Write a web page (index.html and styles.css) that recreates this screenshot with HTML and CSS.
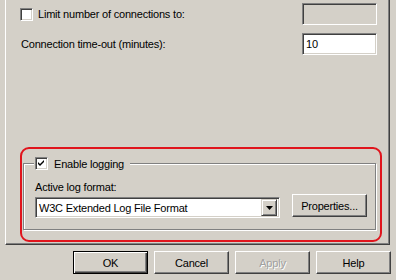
FILE: index.html
```html
<!DOCTYPE html>
<html>
<head>
<meta charset="utf-8">
<link rel="stylesheet" href="styles.css">
</head>
<body>
<div class="page">
  <div class="row row1">
    <label class="check"><span class="box"></span><span class="txt">Limit number of connections to:</span></label>
    <div class="field disabled"></div>
  </div>
  <div class="row row2">
    <span class="lbl">Connection time-out (minutes):</span>
    <div class="field">10</div>
  </div>
  <div class="annot">
    <fieldset class="group">
      <legend class="legend"><span class="box checked"><svg width="7" height="7" viewBox="0 0 7 7"><path d="M0 2 L2 4 L6 0 L6 2 L2 6 L0 4 Z" fill="#000"/></svg></span><span class="txt">Enable logging</span></legend>
      <div class="lbl2">Active log format:</div>
      <div class="fmtrow">
        <div class="combo"><span class="ctext">W3C Extended Log File Format</span><span class="drop"><svg width="7" height="4" viewBox="0 0 7 4"><path d="M0 0 H7 L3.5 4 Z" fill="#000"/></svg></span></div>
        <button class="btn">Properties...</button>
      </div>
    </fieldset>
  </div>
</div>
<div class="buttons">
  <button class="btn default">OK</button>
  <button class="btn">Cancel</button>
  <button class="btn off">Apply</button>
  <button class="btn">Help</button>
</div>
</body>
</html>
```
FILE: styles.css
```css
html, body {
  margin: 0;
  padding: 0;
}
body {
  width: 396px;
  height: 280px;
  overflow: hidden;
  background: #d4d0c8;
  font-family: "Liberation Sans", Arial, sans-serif;
  font-size: 11px;
  letter-spacing: -0.2px;
  color: #000;
}
.page {
  box-sizing: border-box;
  margin-left: 5px;
  width: 385px;
  height: 245px;
  border-left: 1px solid #fff;
  border-right: 1px solid #404040;
  border-bottom: 1px solid #404040;
  box-shadow: inset -1px -1px 0 #808080;
  padding-top: 3px;
  overflow: hidden;
}
.row {
  display: flex;
  align-items: center;
  justify-content: space-between;
  height: 22px;
  padding-right: 12px;
}
.row1 {
  padding-left: 14px;
}
.row2 {
  margin-top: 8px;
  padding-left: 15px;
}
.check {
  display: flex;
  align-items: center;
}
.box {
  box-sizing: border-box;
  width: 13px;
  height: 13px;
  background: #fff;
  border-top: 1px solid #808080;
  border-left: 1px solid #808080;
  border-right: 1px solid #fff;
  border-bottom: 1px solid #fff;
  box-shadow: inset 1px 1px 0 #404040, inset -1px -1px 0 #d4d0c8;
  display: flex;
  align-items: center;
  justify-content: center;
  flex: none;
}
.check .txt {
  margin-left: 5px;
}
.field {
  box-sizing: border-box;
  width: 75px;
  height: 22px;
  background: #fff;
  border-top: 1px solid #808080;
  border-left: 1px solid #808080;
  border-right: 1px solid #fff;
  border-bottom: 1px solid #fff;
  box-shadow: inset 1px 1px 0 #404040, inset -1px -1px 0 #d4d0c8;
  padding: 4px 0 0 3px;
  line-height: 13px;
}
.field.disabled {
  background: #d4d0c8;
}
.annot {
  box-sizing: border-box;
  margin: 92px 0 0 14px;
  width: 362px;
  border: 2px solid #e0141c;
  border-radius: 9px;
  padding: 8px 0 10px 1px;
}
.group {
  box-sizing: border-box;
  width: 353px;
  margin: 0;
  border: 1px solid #808080;
  box-shadow: inset 1px 1px 0 #fff, 1px 1px 0 #fff;
  padding: 0 8px 11px 11px;
  min-width: 0;
}
.legend {
  display: flex;
  align-items: center;
  height: 13px;
  padding: 0 6px 0 1px;
  margin-left: -1px;
  background: #d4d0c8;
}
.legend .txt {
  margin-left: 6px;
}
.lbl2 {
  margin-top: 10px;
  height: 14px;
  line-height: 14px;
}
.fmtrow {
  display: flex;
  align-items: flex-start;
}
.combo {
  box-sizing: border-box;
  margin-top: 3px;
  width: 245px;
  height: 21px;
  background: #fff;
  border-top: 1px solid #808080;
  border-left: 1px solid #808080;
  border-right: 1px solid #fff;
  border-bottom: 1px solid #fff;
  box-shadow: inset 1px 1px 0 #404040, inset -1px -1px 0 #d4d0c8;
  display: flex;
  align-items: center;
  justify-content: space-between;
  padding: 2px 2px 2px 3px;
}
.drop {
  box-sizing: border-box;
  width: 16px;
  height: 17px;
  background: #d4d0c8;
  border-top: 1px solid #d4d0c8;
  border-left: 1px solid #d4d0c8;
  border-right: 1px solid #404040;
  border-bottom: 1px solid #404040;
  box-shadow: inset 1px 1px 0 #fff, inset -1px -1px 0 #808080;
  display: flex;
  align-items: center;
  justify-content: center;
}
.btn {
  box-sizing: border-box;
  width: 75px;
  height: 23px;
  margin: 0;
  padding: 0;
  font-family: "Liberation Sans", Arial, sans-serif;
  font-size: 11px;
  letter-spacing: -0.2px;
  color: #000;
  background: #d4d0c8;
  border-top: 1px solid #fff;
  border-left: 1px solid #fff;
  border-right: 1px solid #404040;
  border-bottom: 1px solid #404040;
  box-shadow: inset -1px -1px 0 #808080;
  border-radius: 0;
}
.fmtrow .btn {
  margin-left: 12px;
}
.buttons {
  display: flex;
  justify-content: flex-end;
  gap: 6px;
  margin-top: 6px;
  padding-right: 5px;
}
.btn.default {
  border: 1px solid #000;
  box-shadow: inset 1px 1px 0 #fff, inset -1px -1px 0 #404040, inset -2px -2px 0 #808080;
}
.btn.off {
  color: #a0a0a0;
  text-shadow: 1px 1px 0 #fff;
}
```
